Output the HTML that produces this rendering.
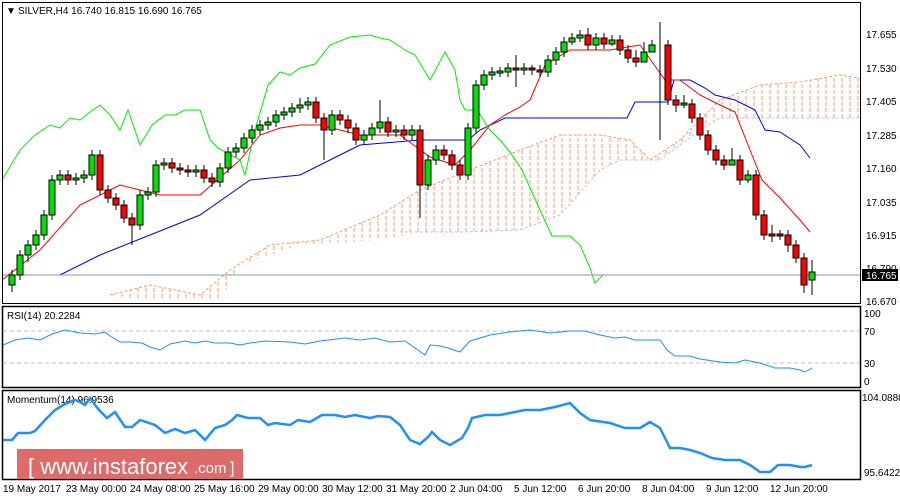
<!DOCTYPE html>
<html><head><meta charset="utf-8"><style>
html,body{margin:0;padding:0;background:#fff;width:900px;height:500px;overflow:hidden}
svg{display:block;font-family:"Liberation Sans",sans-serif}
text{font-size:10px;fill:#000}
.g{fill:#00e000;stroke:#000}
.r{fill:#ff0000;stroke:#000}
</style></head><body>
<svg width="900" height="500" xmlns="http://www.w3.org/2000/svg">
<defs>
<pattern id="hatch" width="8" height="6" patternUnits="userSpaceOnUse"><line x1="2" y1="0" x2="2" y2="4" stroke="#f0a070" stroke-width="1"/></pattern>
</defs>
<rect x="0" y="0" width="900" height="500" fill="#fff"/>
<polygon fill="url(#hatch)" points="110,295 150,285 200,295 230,270 270,245 320,240 380,215 420,190 470,170 520,150 560,135 600,135 630,140 650,160 680,140 720,100 760,85 800,82 840,75 860,78 860,118 760,118 720,118 700,130 660,160 620,160 600,170 560,215 520,230 460,232 420,232 380,240 300,245 240,265 220,300 200,300 150,300"/>
<polyline fill="none" stroke="#f0a070" stroke-dasharray="3,2" points="110,295 150,285 200,295 230,270 270,245 320,240 380,215 420,190 470,170 520,150 560,135 600,135 630,140 650,160 680,140 720,100 760,85 800,82 840,75 860,78"/>
<polyline fill="none" stroke="#d8b8d8" stroke-dasharray="3,2" points="400,232 460,232 520,230 560,215 600,170 620,160 660,160 700,130 720,118 860,118"/>
<polyline fill="none" stroke="#0000ff" points="2,275 60,275 100,255 150,235 200,215 250,180 300,175 330,160 350,150 360,145 420,140 468,140 480,130 505,118 550,118 627,118 635,102 668,102 674,80 690,80 705,88 715,95 735,100 755,110 765,130 780,132 800,145 810,158"/>
<polyline fill="none" stroke="#ff0000" points="2,280 40,250 80,205 120,185 160,195 200,195 240,160 260,135 280,128 300,125 320,125 360,135 400,135 430,157 455,165 470,150 490,125 505,115 520,107 530,100 545,65 570,50 610,50 640,45 665,80 680,80 700,95 720,105 735,112 750,150 762,180 780,198 800,220 810,232"/>
<polyline fill="none" stroke="#00ee00" points="2,180 20,150 35,135 50,125 60,128 70,118 80,120 90,112 100,105 110,115 120,130 128,110 140,145 152,125 165,115 175,115 185,110 200,110 210,140 218,148 240,160 245,175 255,130 268,85 280,72 290,75 300,68 315,64 330,45 350,37 370,35 380,38 390,40 405,50 415,55 430,80 445,52 455,70 460,100 465,110 477,110 490,130 500,140 510,152 522,170 540,210 552,236 570,236 580,245 590,268 595,283 603,275"/>
<line x1="2" y1="275" x2="860" y2="275" stroke="#8c9aa8" stroke-width="1"/>
<!-- wicks -->
<path stroke="#000" fill="none" d="M12 270V292M20 250V280M28 240V262M36 230V250M44 210V240M52 175V220M60 170V185M68 170V185M76 173V185M84 170V183M92 150V180M100 150V195M108 185V203M116 193V210M124 200V223M132 213V245M140 190V230M148 187V200M156 160V197M164 158V170M172 158V173M180 163V175M188 165V177M196 165V177M204 165V183M212 173V187M220 163V187M228 147V173M236 143V157M244 133V153M252 125V143M260 120V135M268 117V130M276 110V127M284 107V120M292 103V117M300 98V113M308 97V110M316 97V123M324 113V160M332 110V135M340 110V125M348 115V133M356 123V145M364 130V145M372 123V140M380 100V133M388 117V137M396 125V137M404 125V140M412 125V140M420 125V218M428 155V190M436 145V165M444 145V160M452 150V170M460 160V180M468 123V180M476 80V133M484 70V90M492 67V80M500 67V77M508 63V77M516 55V87M524 63V75M532 65V75M540 65V77M548 55V77M556 47V65M564 37V57M572 33V45M580 30V42M588 28V50M596 33V50M604 33V49M612 35V46M620 35V55M628 45V63M636 50V67M644 42V57M652 40V50M660 22V140M668 40V105M676 95V112M684 95V108M692 99V123M700 113V140M708 130V155M716 145V165M724 155V170M732 148V165M740 155V185M748 170V183M756 170V220M764 210V240M772 225V242M780 230V240M788 230V252M796 240V263M804 253V293M812 260V295"/>
<!-- bodies -->
<g stroke-width="1">
<rect class="g" x="9" y="275" width="6" height="10"/><rect class="g" x="17" y="255" width="6" height="20"/><rect class="g" x="25" y="245" width="6" height="10"/><rect class="g" x="33" y="235" width="6" height="10"/><rect class="g" x="41" y="215" width="6" height="20"/><rect class="g" x="49" y="180" width="6" height="35"/><rect class="g" x="57" y="175" width="6" height="5"/><rect class="r" x="65" y="175" width="6" height="5"/><rect class="g" x="73" y="178" width="6" height="2"/><rect class="g" x="81" y="175" width="6" height="3"/><rect class="g" x="89" y="155" width="6" height="20"/><rect class="r" x="97" y="155" width="6" height="35"/><rect class="r" x="105" y="190" width="6" height="8"/><rect class="r" x="113" y="198" width="6" height="7"/><rect class="r" x="121" y="205" width="6" height="13"/><rect class="r" x="129" y="218" width="6" height="7"/><rect class="g" x="137" y="195" width="6" height="30"/><rect class="g" x="145" y="192" width="6" height="3"/><rect class="g" x="153" y="165" width="6" height="27"/><rect class="g" x="161" y="163" width="6" height="2"/><rect class="r" x="169" y="163" width="6" height="5"/><rect class="r" x="177" y="168" width="6" height="2"/><rect class="r" x="185" y="170" width="6" height="2"/><rect class="g" x="193" y="170" width="6" height="2"/><rect class="r" x="201" y="170" width="6" height="8"/><rect class="r" x="209" y="178" width="6" height="4"/><rect class="g" x="217" y="168" width="6" height="14"/><rect class="g" x="225" y="152" width="6" height="16"/><rect class="g" x="233" y="148" width="6" height="4"/><rect class="g" x="241" y="138" width="6" height="10"/><rect class="g" x="249" y="130" width="6" height="8"/><rect class="g" x="257" y="125" width="6" height="5"/><rect class="g" x="265" y="122" width="6" height="3"/><rect class="g" x="273" y="115" width="6" height="7"/><rect class="g" x="281" y="112" width="6" height="3"/><rect class="g" x="289" y="108" width="6" height="4"/><rect class="g" x="297" y="105" width="6" height="3"/><rect class="g" x="305" y="102" width="6" height="3"/><rect class="r" x="313" y="102" width="6" height="16"/><rect class="r" x="321" y="118" width="6" height="12"/><rect class="g" x="329" y="115" width="6" height="15"/><rect class="r" x="337" y="115" width="6" height="5"/><rect class="r" x="345" y="120" width="6" height="8"/><rect class="r" x="353" y="128" width="6" height="12"/><rect class="g" x="361" y="135" width="6" height="5"/><rect class="g" x="369" y="128" width="6" height="7"/><rect class="g" x="377" y="122" width="6" height="6"/><rect class="r" x="385" y="122" width="6" height="10"/><rect class="g" x="393" y="130" width="6" height="2"/><rect class="r" x="401" y="130" width="6" height="5"/><rect class="g" x="409" y="130" width="6" height="5"/><rect class="r" x="417" y="130" width="6" height="55"/><rect class="g" x="425" y="160" width="6" height="25"/><rect class="g" x="433" y="150" width="6" height="10"/><rect class="r" x="441" y="150" width="6" height="5"/><rect class="r" x="449" y="155" width="6" height="10"/><rect class="r" x="457" y="165" width="6" height="10"/><rect class="g" x="465" y="128" width="6" height="47"/><rect class="g" x="473" y="85" width="6" height="43"/><rect class="g" x="481" y="75" width="6" height="10"/><rect class="g" x="489" y="72" width="6" height="3"/><rect class="g" x="497" y="71" width="6" height="2"/><rect class="g" x="505" y="68" width="6" height="4"/><rect class="r" x="513" y="68" width="6" height="2"/><rect class="g" x="521" y="68" width="6" height="2"/><rect class="r" x="529" y="68" width="6" height="2"/><rect class="r" x="537" y="70" width="6" height="2"/><rect class="g" x="545" y="60" width="6" height="12"/><rect class="g" x="553" y="52" width="6" height="8"/><rect class="g" x="561" y="42" width="6" height="10"/><rect class="g" x="569" y="38" width="6" height="4"/><rect class="g" x="577" y="35" width="6" height="3"/><rect class="r" x="585" y="35" width="6" height="10"/><rect class="g" x="593" y="38" width="6" height="7"/><rect class="r" x="601" y="38" width="6" height="6"/><rect class="g" x="609" y="40" width="6" height="4"/><rect class="r" x="617" y="40" width="6" height="10"/><rect class="r" x="625" y="50" width="6" height="8"/><rect class="r" x="633" y="58" width="6" height="4"/><rect class="g" x="641" y="52" width="6" height="10"/><rect class="g" x="649" y="45" width="6" height="7"/><rect class="r" x="665" y="45" width="6" height="55"/><rect class="r" x="673" y="100" width="6" height="5"/><rect class="g" x="681" y="103" width="6" height="2"/><rect class="r" x="689" y="104" width="6" height="14"/><rect class="r" x="697" y="118" width="6" height="17"/><rect class="r" x="705" y="135" width="6" height="15"/><rect class="r" x="713" y="150" width="6" height="10"/><rect class="r" x="721" y="160" width="6" height="5"/><rect class="g" x="729" y="160" width="6" height="5"/><rect class="r" x="737" y="160" width="6" height="20"/><rect class="g" x="745" y="175" width="6" height="5"/><rect class="r" x="753" y="175" width="6" height="40"/><rect class="r" x="761" y="215" width="6" height="20"/><rect class="r" x="769" y="234" width="6" height="2"/><rect class="r" x="777" y="234" width="6" height="2"/><rect class="r" x="785" y="235" width="6" height="10"/><rect class="r" x="793" y="245" width="6" height="13"/><rect class="r" x="801" y="258" width="6" height="27"/><rect class="g" x="809" y="272" width="6" height="8"/>
</g>
<rect x="2.5" y="2.5" width="858" height="301" fill="none" stroke="#000"/>
<rect x="2.5" y="306.5" width="858" height="81" fill="none" stroke="#000" stroke-width="1.5"/>
<rect x="2.5" y="390.5" width="858" height="89" fill="none" stroke="#000" stroke-width="1.5"/>
<text x="6" y="14" font-size="8">▼</text>
<text x="18" y="14">SILVER,H4  16.740 16.815 16.690 16.765</text>
<g>
<text x="866" y="38">17.655</text><text x="866" y="72">17.530</text><text x="866" y="105">17.405</text><text x="866" y="139">17.285</text><text x="866" y="172">17.160</text><text x="866" y="206">17.035</text><text x="866" y="239">16.915</text><text x="866" y="272">16.790</text><text x="866" y="305">16.670</text>
<rect x="862" y="269" width="36" height="12" fill="#000"/><text x="866" y="279" style="fill:#fff">16.765</text>
<text x="864" y="317">100</text><text x="864" y="335">70</text><text x="864" y="367">30</text><text x="864" y="385">0</text>
<text x="862" y="401">104.0888</text><text x="864" y="476">95.6422</text>
</g>
<line x1="3" y1="331" x2="860" y2="331" stroke="#c0c0c0" stroke-dasharray="4,3"/>
<line x1="3" y1="363" x2="860" y2="363" stroke="#c0c0c0" stroke-dasharray="4,3"/>
<text x="7" y="319">RSI(14) 20.2284</text>
<polyline fill="none" stroke="#1e90ff" points="3,345 15,340 28,338 40,340 52,334 65,330 80,333 95,334 105,332 110,336 120,342 130,342 142,343 150,347 160,350 170,344 185,341 195,343 205,341 215,343 230,343 240,345 250,343 265,341 290,342 305,344 320,341 345,338 360,340 375,338 390,342 405,341 415,348 425,355 430,345 440,346 448,348 460,352 470,341 490,335 510,332 530,330 550,333 570,331 585,331 600,335 615,338 625,337 635,340 645,340 660,340 667,350 675,356 690,356 700,359 720,362 735,363 745,360 760,363 775,368 790,368 800,370 805,372 812,368"/>
<text x="7" y="403">Momentum(14) 96.9536</text>
<polyline fill="none" stroke="#1e90ff" stroke-width="2.5" points="3,440 12,440 18,433 30,433 35,431 45,420 55,410 65,404 75,400 80,402 85,405 90,398 95,405 100,411 107,418 115,412 125,427 132,427 140,420 155,425 165,433 175,429 185,433 195,430 205,440 215,428 225,425 232,420 237,415 248,418 260,418 268,425 275,423 290,425 298,420 310,422 322,415 335,415 345,417 355,415 370,418 378,416 390,417 400,425 410,440 420,444 428,437 432,432 440,440 450,445 462,438 468,428 472,418 485,415 500,415 515,412 525,410 540,410 555,407 570,403 580,413 590,420 610,423 625,428 640,428 650,422 660,428 670,448 680,448 690,450 700,453 712,458 725,460 740,460 750,465 760,472 770,472 778,465 790,465 800,467 805,467 812,465"/>
<rect x="17" y="449" width="226" height="30" fill="#dc5a5a" opacity="0.9"/>
<text x="28" y="474" style="font-size:22px;fill:#fff">[ www.instaforex</text><text x="194" y="473" style="font-size:15px;fill:#fff">.com</text><text x="230" y="473" style="font-size:16px;fill:#fff">]</text>
<g>
<text x="3" y="492">19 May 2017</text><text x="66" y="492">23 May 00:00</text><text x="130" y="492">24 May 08:00</text><text x="194" y="492">25 May 16:00</text><text x="258" y="492">29 May 00:00</text><text x="322" y="492">30 May 12:00</text><text x="386" y="492">31 May 20:00</text><text x="450" y="492">2 Jun 04:00</text><text x="514" y="492">5 Jun 12:00</text><text x="578" y="492">6 Jun 20:00</text><text x="642" y="492">8 Jun 04:00</text><text x="706" y="492">9 Jun 12:00</text><text x="770" y="492">12 Jun 20:00</text>
</g>
</svg>
</body></html>
